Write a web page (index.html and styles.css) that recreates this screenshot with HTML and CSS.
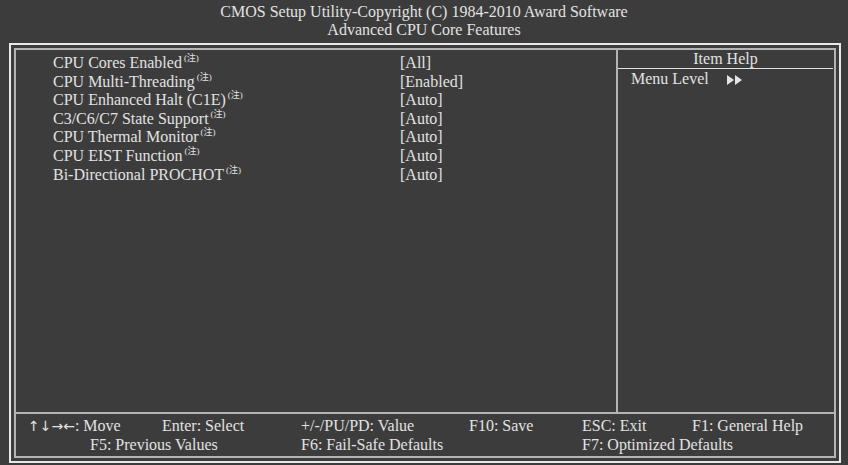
FILE: index.html
```html
<!DOCTYPE html>
<html>
<head>
  <title>Advanced CPU Core Features</title>
  <link rel="stylesheet" href="styles.css">
</head>
<body>
  <div class="title">
    <div>CMOS Setup Utility-Copyright (C) 1984-2010 Award Software</div>
    <div>Advanced CPU Core Features</div>
  </div>

  <div class="outer">
    <div class="inner">
      <div class="main">
        <div class="items">
          <div class="row"><span class="label">CPU Cores Enabled<sup class="note">(注)</sup></span><span class="value">[All]</span></div>
          <div class="row"><span class="label">CPU Multi-Threading<sup class="note">(注)</sup></span><span class="value">[Enabled]</span></div>
          <div class="row"><span class="label">CPU Enhanced Halt (C1E)<sup class="note">(注)</sup></span><span class="value">[Auto]</span></div>
          <div class="row"><span class="label">C3/C6/C7 State Support<sup class="note">(注)</sup></span><span class="value">[Auto]</span></div>
          <div class="row"><span class="label">CPU Thermal Monitor<sup class="note">(注)</sup></span><span class="value">[Auto]</span></div>
          <div class="row"><span class="label">CPU EIST Function<sup class="note">(注)</sup></span><span class="value">[Auto]</span></div>
          <div class="row"><span class="label">Bi-Directional PROCHOT<sup class="note">(注)</sup></span><span class="value">[Auto]</span></div>
        </div>
        <div class="help">
          <div class="help-title">Item Help</div>
          <div class="help-level">Menu Level
            <svg class="arrows" width="16" height="10" viewBox="0 0 16 10">
              <polygon points="0,0 7,5 0,10" fill="#e4e4e4"/>
              <polygon points="8,0 15,5 8,10" fill="#e4e4e4"/>
            </svg>
          </div>
        </div>
      </div>

      <div class="keys">
        <span><span class="arr">↑↓→←</span>: Move</span>
        <span>Enter: Select</span>
        <span>+/-/PU/PD: Value</span>
        <span>F10: Save</span>
        <span>ESC: Exit</span>
        <span>F1: General Help</span>
        <span class="f5">F5: Previous Values</span>
        <span class="f6">F6: Fail-Safe Defaults</span>
        <span class="f7">F7: Optimized Defaults</span>
      </div>
    </div>
  </div>
</body>
</html>
```

FILE: styles.css
```css
body {
  margin: 0;
  background-color: #3c3c3c;
  color: #e2e2e2;
  font-family: "Liberation Serif", "Times New Roman", serif;
  font-size: 16px;
  width: 848px;
  height: 465px;
  overflow: hidden;
}

/* Header */
.title {
  height: 43px;
  padding-top: 3px;
  box-sizing: border-box;
  text-align: center;
  line-height: 18px;
}

/* Double frame */
.outer {
  margin: 0 7px 0 9px;
  border: 2px solid #e8e8e8;
  padding: 3px;
  height: 420px;
  box-sizing: border-box;
}

.inner {
  border: 2px solid #b4b4b4;
  height: 100%;
  box-sizing: border-box;
  display: flex;
  flex-direction: column;
}

.main {
  display: flex;
  height: 362px;
  border-bottom: 2px solid #b4b4b4;
}

.items {
  width: 602px;
  padding: 4px 0 0 37px;
  box-sizing: border-box;
  border-right: 2px solid #b4b4b4;
}

.row {
  display: flex;
  height: 18.6px;
  line-height: 18.6px;
}

.label {
  width: 347px;
}

.note {
  font-size: 9px;
  vertical-align: 7px;
  line-height: 0;
  margin-left: 2px;
  font-family: "Liberation Serif", "Noto Sans CJK SC", serif;
}

.help {
  flex: 1;
}

.help-title {
  text-align: center;
  height: 18px;
  line-height: 18px;
  border-bottom: 1px solid #e0e0e0;
  margin-right: 1px;
}

.help-level {
  padding-left: 13px;
  line-height: 19px;
}

.arrows {
  margin-left: 14px;
  vertical-align: -1px;
}

/* Key legend */
.keys {
  display: grid;
  grid-template-columns: 134px 139px 168px 113px 110px 1fr;
  padding: 2px 0 0 12px;
  line-height: 19px;
}

.arr {
  font-family: "DejaVu Sans", sans-serif;
  font-size: 14px;
  line-height: 0;
}

.f5 {
  grid-column: 1 / span 2;
  padding-left: 62px;
}

.f6 {
  grid-column: 3 / span 2;
}

.f7 {
  grid-column: 5 / span 2;
}
```
